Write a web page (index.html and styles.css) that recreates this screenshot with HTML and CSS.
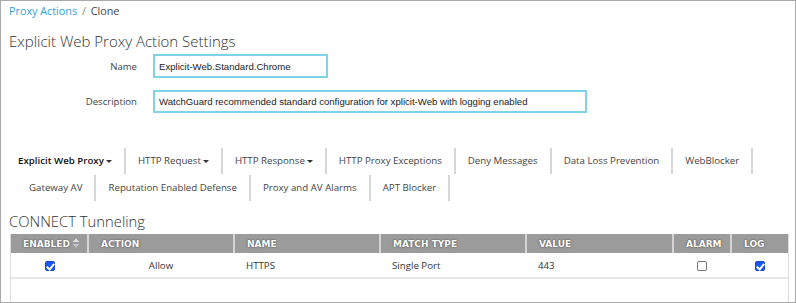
FILE: index.html
```html
<!DOCTYPE html>
<html lang="en">
  <head>
    <meta charset="UTF-8" />
    <title>Clone - Proxy Actions</title>
    <link rel="stylesheet" href="styles.css">
  </head>
  <body>
    <div class="page">
      <div class="breadcrumb">
        <a href="#">Proxy Actions</a>
        <span class="sep">/</span>
        <span>Clone</span>
      </div>

      <h1>Explicit Web Proxy Action Settings</h1>

      <div class="form">
        <label for="name">Name</label>
        <input id="name" class="name-input" type="text" value="Explicit-Web.Standard.Chrome" />
        <label for="desc">Description</label>
        <input id="desc" class="desc-input" type="text" value="WatchGuard recommended standard configuration for xplicit-Web with logging enabled" />
      </div>

      <ul class="tabs">
        <li class="active">Explicit Web Proxy<span class="caret"></span></li>
        <li>HTTP Request<span class="caret"></span></li>
        <li>HTTP Response<span class="caret"></span></li>
        <li>HTTP Proxy Exceptions</li>
        <li>Deny Messages</li>
        <li>Data Loss Prevention</li>
        <li>WebBlocker</li>
        <li>Gateway AV</li>
        <li>Reputation Enabled Defense</li>
        <li>Proxy and AV Alarms</li>
        <li>APT Blocker</li>
      </ul>

      <h2>CONNECT Tunneling</h2>

      <div class="grid-wrap">
        <table class="grid">
          <colgroup>
            <col style="width: 77px" />
            <col style="width: 146px" />
            <col style="width: 146px" />
            <col style="width: 146px" />
            <col style="width: 147px" />
            <col style="width: 58px" />
            <col style="width: 57px" />
          </colgroup>
          <thead>
            <tr>
              <th class="sortable">ENABLED<span class="sort"></span></th>
              <th>ACTION</th>
              <th>NAME</th>
              <th>MATCH TYPE</th>
              <th>VALUE</th>
              <th class="center">ALARM</th>
              <th>LOG</th>
            </tr>
          </thead>
          <tbody>
            <tr>
              <td class="center"><span class="check on"></span></td>
              <td class="center">Allow</td>
              <td>HTTPS</td>
              <td>Single Port</td>
              <td>443</td>
              <td class="center"><span class="check"></span></td>
              <td class="center"><span class="check on"></span></td>
            </tr>
          </tbody>
        </table>
      </div>
    </div>
  </body>
</html>
```

FILE: styles.css
```css
:root {
  --link: #2fa3d6;
  --text: #333;
  --input-border: #7fd3e8;
  --head-bg: #9b9b9b;
  --line: #d6d6d6;
}

body {
  margin: 0;
  font-family: "Open Sans", Arial, sans-serif;
  color: var(--text);
}

.page {
  width: 796px;
  height: 303px;
  box-sizing: border-box;
  border: 1px solid #aaa;
  padding: 2px 6px 0 8px;
  background: #fff;
  overflow: hidden;
  display: flex;
  flex-direction: column;
}

.breadcrumb {
  font-size: 10.8px;
  line-height: 16px;
  color: #444;
}

.breadcrumb a {
  color: var(--link);
  text-decoration: none;
}

.breadcrumb .sep {
  color: #888;
  margin: 0 2px;
}

h1 {
  margin: 12px 0 0;
  font-size: 15px;
  line-height: 20px;
  font-weight: 300;
  color: #333;
}

.form {
  display: grid;
  grid-template-columns: 128px auto;
  column-gap: 16px;
  row-gap: 12px;
  align-items: center;
  justify-items: start;
  margin-top: 3px;
}

.form label {
  justify-self: end;
  font-size: 9.6px;
  color: #444;
}

.form input {
  box-sizing: border-box;
  border: 1px solid var(--input-border);
  outline: 1px solid var(--input-border);
  outline-offset: -2px;
  font-family: "Liberation Sans", Arial, sans-serif;
  font-size: 9.6px;
  color: #222;
  padding: 0 5px;
  margin: 0;
}

.name-input {
  width: 175px;
  height: 24px;
}

.desc-input {
  width: 434px;
  height: 23px;
}

.tabs {
  list-style: none;
  display: flex;
  flex-wrap: wrap;
  margin: 35px 0 0;
  padding: 0 0 0 8px;
  row-gap: 1px;
}

.tabs li {
  height: 26px;
  line-height: 26px;
  padding: 0 12px;
  font-size: 9.7px;
  color: #444;
  border-right: 2px solid var(--line);
  white-space: nowrap;
}

.tabs li.active {
  font-weight: 600;
  color: #111;
  margin-left: -11px;
}

.caret {
  display: inline-block;
  margin-left: 2px;
  vertical-align: middle;
  border-left: 3px solid transparent;
  border-right: 3px solid transparent;
  border-top: 3px solid #333;
}

h2 {
  margin: 10px 0 0;
  font-size: 14.8px;
  line-height: 20px;
  font-weight: 300;
  color: #333;
}

.grid-wrap {
  flex: 1;
  margin: 3px 0 0 1px;
  width: 779px;
  box-sizing: border-box;
  border-left: 1px solid #dcdcdc;
  border-right: 1px solid #dcdcdc;
}

.grid {
  width: 100%;
  table-layout: fixed;
  border-collapse: collapse;
}

.grid th {
  background: var(--head-bg);
  height: 19px;
  padding: 0 12px;
  text-align: left;
  font-family: "DejaVu Sans", Verdana, sans-serif;
  font-size: 9px;
  font-weight: bold;
  color: #fff;
  text-shadow: 0 0 2px #555, 0 0 1px #555;
  border-left: 2px solid #d4d4d4;
  white-space: nowrap;
}

.grid th:first-child {
  border-left: none;
}

.grid th.center {
  text-align: center;
}

.sort {
  display: inline-block;
  width: 7px;
  height: 10px;
  margin-left: 3px;
  vertical-align: -1px;
  background:
    linear-gradient(to bottom right, transparent 50%, #ddd 50%) 0 0 / 3.5px 4px no-repeat,
    linear-gradient(to bottom left, transparent 50%, #ddd 50%) 3.5px 0 / 3.5px 4px no-repeat,
    linear-gradient(to top right, transparent 50%, #c4c4c4 50%) 0 6px / 3.5px 4px no-repeat,
    linear-gradient(to top left, transparent 50%, #c4c4c4 50%) 3.5px 6px / 3.5px 4px no-repeat;
}

.grid td {
  height: 24px;
  padding: 0 12px;
  font-size: 9.7px;
  color: #333;
  border-bottom: 2px solid #e8e8e8;
}

.grid td.center {
  text-align: center;
}

.check {
  display: inline-block;
  width: 10px;
  height: 10px;
  box-sizing: border-box;
  border: 1px solid #777;
  border-radius: 2px;
  vertical-align: middle;
  position: relative;
}

.check.on {
  background: #1a57f0;
  border-color: #1448d0;
}

.check.on::after {
  content: "";
  position: absolute;
  left: 2px;
  top: 0px;
  width: 3px;
  height: 6px;
  border: solid #fff;
  border-width: 0 2px 2px 0;
  transform: rotate(40deg);
}
```
